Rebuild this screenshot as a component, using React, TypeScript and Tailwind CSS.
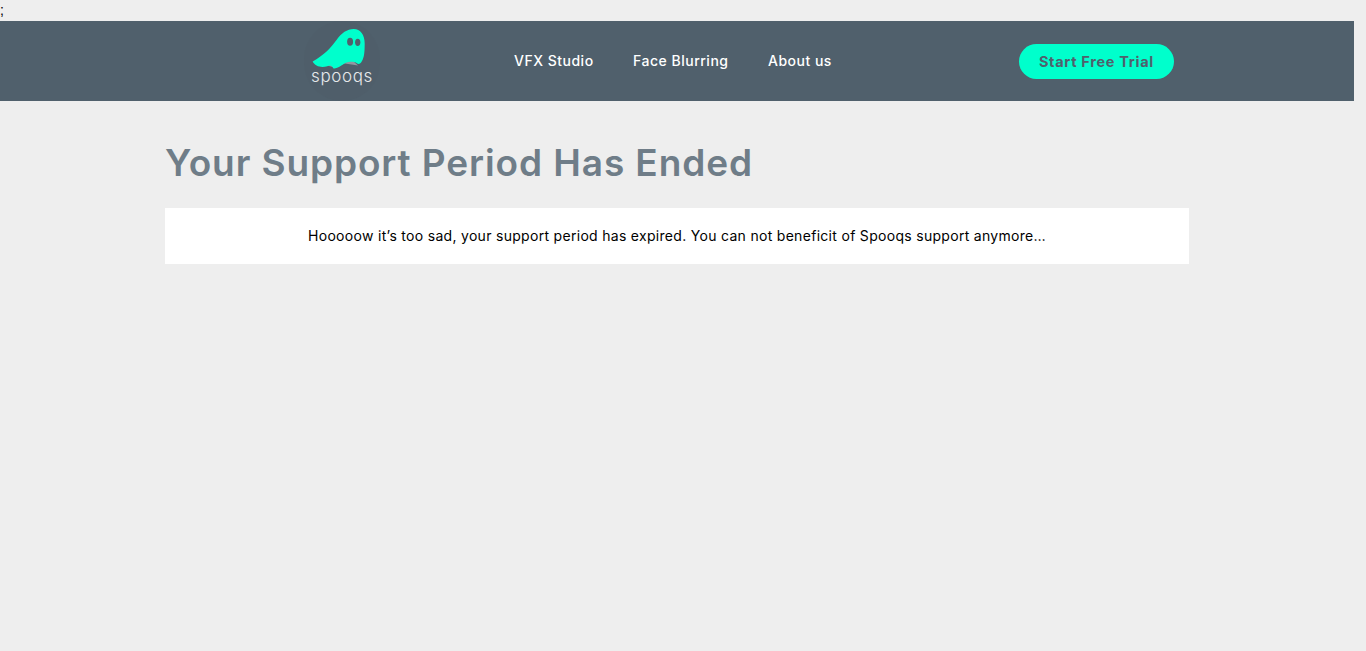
const navLinks = ["VFX Studio", "Face Blurring", "About us"]

function Logo() {
  return (
    <div className="flex h-[80px] w-[76px] flex-col rounded-full bg-[#4f5e6a] pt-[6px]">
      <svg width="58" height="45" viewBox="60 36 175 135" className="ml-[6px] shrink-0">
        <path d="M105 150 L130 138 L190 138 L205 152 L165 146 L135 158 Z" fill="#8f99a1" />
        <path
          d="M68 140 C100 122 122 100 140 75 C155 54 172 42 192 42 C212 42 225 60 225 85 C225 110 224 128 216 140 C212 148 205 150 198 143 C192 140 178 139 165 145 C150 155 138 163 130 160 C126 152 122 150 112 154 C95 160 75 155 68 140 Z"
          fill="#00ffcc"
        />
        <ellipse cx="181" cy="80" rx="9" ry="12" fill="#50606c" />
        <ellipse cx="204" cy="82" rx="8" ry="11" fill="#50606c" />
      </svg>
      <span className="mt-[-6px] text-center text-[17px] leading-[20px] font-light tracking-[0.6px] text-[#e6e9eb]">spooqs</span>
    </div>
  )
}

export default function App() {
  return (
    <div className="min-h-[651px] bg-[#eeeeee] font-[Inter,sans-serif]">
      <div className="h-[21px] font-['Liberation_Sans',sans-serif] text-[14px] leading-[21px] text-black">;</div>

      {/* Top nav */}
      <header className="flex h-[80px] w-[1354px] items-center bg-[#50606c] pl-[304px]">
        <Logo />
        <nav className="mb-[2px] ml-[134px] flex items-center gap-[39.5px]">
          {navLinks.map((link) => (
            <a key={link} className="text-[14px] font-medium tracking-[0.5px] text-white" href="#">
              {link}
            </a>
          ))}
        </nav>
        <a
          className="ml-[187px] flex h-[35px] w-[155px] items-center justify-center rounded-full bg-[#00ffcc] pt-[1px] text-[14.5px] font-bold tracking-[0.7px] text-[#50606c]"
          href="#"
        >
          Start Free Trial
        </a>
      </header>

      <main className="w-[1354px] px-[165px]">
        <h1 className="mt-[39px] text-[37px] leading-[46px] font-semibold tracking-[0.9px] text-[#6f7d88]">Your Support Period Has Ended</h1>
        <div className="mt-[22px] flex h-[56px] items-center justify-center bg-white pb-[2px] text-[14px] tracking-[0.3px] text-black">
          Hooooow it’s too sad, your support period has expired. You can not beneficit of Spooqs support anymore…
        </div>
      </main>
    </div>
  )
}
